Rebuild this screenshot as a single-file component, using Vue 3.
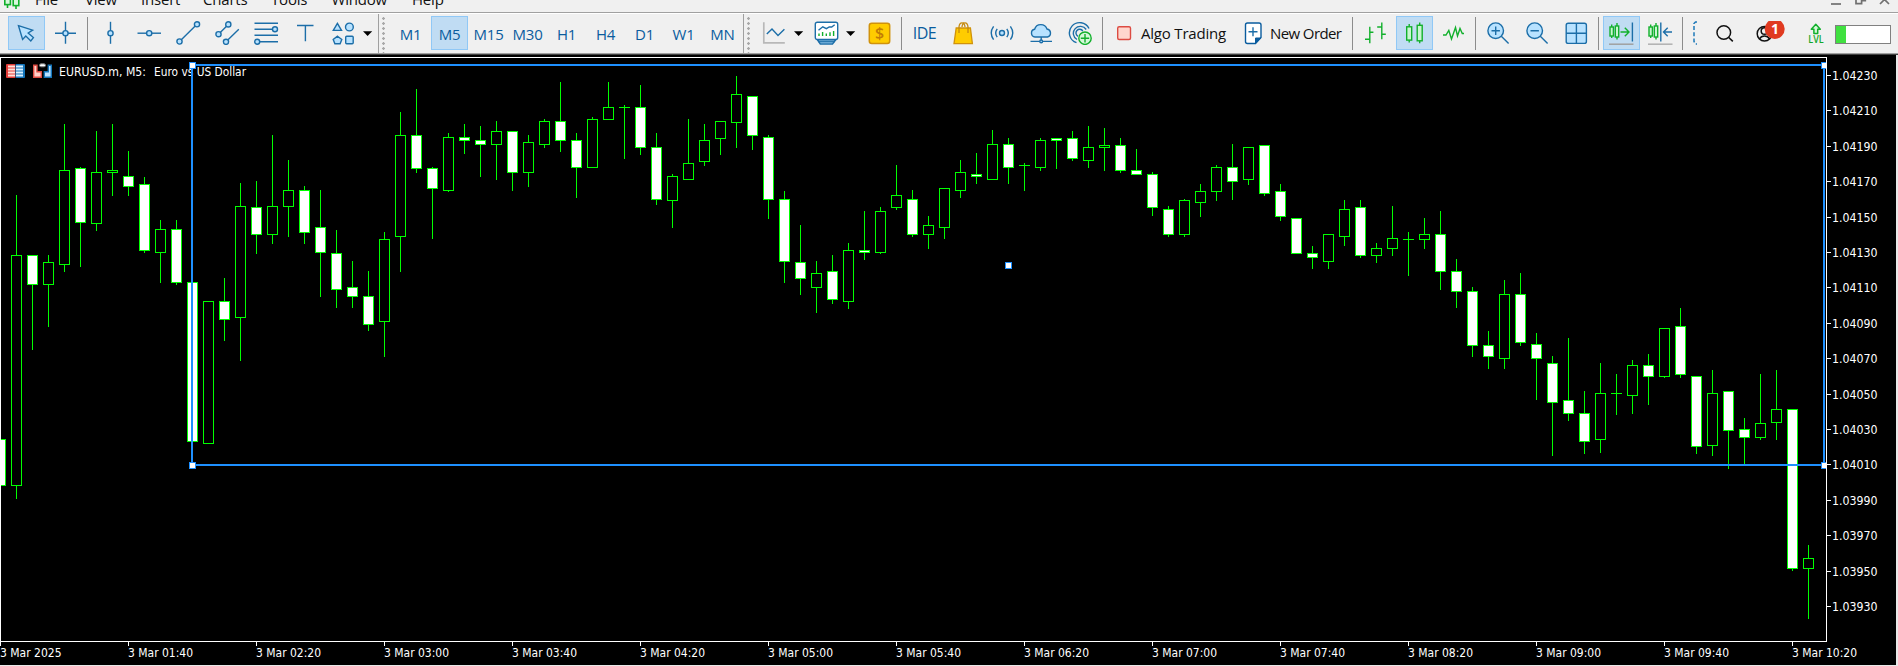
<script setup>
import { computed } from 'vue'

const menus = [
  { label: 'File', width: 50 },
  { label: 'View', width: 56 },
  { label: 'Insert', width: 62 },
  { label: 'Charts', width: 68 },
  { label: 'Tools', width: 60.5 },
  { label: 'Window', width: 80.5 },
  { label: 'Help', width: 60 }
]

const timeframes = ['M1', 'M5', 'M15', 'M30', 'H1', 'H4', 'D1', 'W1', 'MN']
const activeTimeframe = 'M5'

// one row per bar: wick top, body top, body bottom, wick bottom, bearish
const bars = [
  [439, 439, 486, 486, 1], [195, 255, 486, 499, 0], [255, 255, 285, 350, 1], [255, 262, 285, 327, 0],
  [124, 170, 265, 272, 0], [167, 168, 223, 267, 1], [131, 172, 224, 231, 0], [124, 170, 173, 196, 0],
  [151, 176, 187, 196, 1], [177, 184, 251, 253, 1], [220, 229, 253, 283, 0], [220, 229, 283, 285, 1],
  [282, 282, 442, 442, 1], [301, 301, 444, 444, 0], [278, 301, 320, 341, 1], [183, 206, 318, 361, 0],
  [181, 207, 235, 254, 1], [135, 206, 235, 244, 0], [160, 190, 207, 237, 0], [186, 190, 233, 244, 1],
  [190, 227, 253, 297, 1], [230, 253, 290, 308, 1], [261, 287, 297, 308, 1], [271, 296, 325, 331, 1],
  [232, 239, 322, 357, 0], [112, 135, 237, 272, 0], [89, 135, 169, 173, 1], [167, 168, 189, 239, 1],
  [133, 137, 191, 192, 0], [124, 137, 141, 154, 1], [126, 140, 145, 177, 1], [121, 131, 145, 180, 0],
  [131, 131, 173, 191, 1], [135, 142, 173, 187, 0], [119, 121, 145, 148, 0], [82, 121, 141, 152, 1],
  [133, 140, 168, 198, 1], [117, 119, 168, 168, 0], [82, 107, 120, 120, 0], [105, 107, 108, 159, 0],
  [85, 107, 148, 155, 1], [133, 147, 200, 205, 1], [174, 176, 201, 228, 0], [119, 163, 180, 180, 0],
  [124, 140, 162, 166, 0], [121, 121, 139, 155, 0], [76, 94, 123, 148, 0], [96, 96, 136, 150, 1],
  [135, 137, 200, 219, 1], [191, 199, 262, 283, 1], [225, 262, 279, 295, 1], [261, 273, 288, 313, 0],
  [255, 271, 300, 304, 1], [243, 250, 302, 309, 0], [211, 250, 253, 260, 1], [207, 211, 253, 254, 0],
  [165, 195, 208, 210, 0], [190, 199, 235, 237, 1], [216, 225, 235, 249, 0], [188, 188, 228, 239, 0],
  [160, 172, 191, 198, 0], [153, 174, 177, 184, 1], [130, 144, 180, 180, 0], [138, 144, 168, 184, 1],
  [163, 165, 166, 191, 0], [138, 140, 168, 171, 0], [138, 138, 141, 169, 1], [131, 138, 159, 161, 1],
  [126, 147, 161, 168, 0], [128, 145, 148, 171, 0], [138, 145, 171, 173, 1], [149, 170, 175, 175, 1],
  [172, 174, 208, 216, 1], [206, 209, 235, 237, 1], [199, 200, 235, 237, 0], [184, 191, 203, 217, 0],
  [165, 167, 192, 201, 0], [144, 167, 182, 200, 1], [147, 147, 180, 185, 0], [145, 145, 194, 196, 1],
  [184, 191, 217, 221, 1], [218, 218, 254, 254, 1], [246, 253, 258, 269, 1], [234, 234, 262, 269, 0],
  [200, 209, 237, 246, 0], [200, 207, 256, 258, 1], [243, 248, 256, 263, 0], [206, 238, 249, 256, 0],
  [232, 239, 240, 276, 0], [218, 234, 240, 249, 0], [211, 234, 272, 290, 1], [259, 271, 292, 308, 1],
  [287, 291, 346, 357, 1], [331, 345, 357, 369, 1], [280, 294, 359, 369, 0], [273, 294, 343, 346, 1],
  [333, 344, 359, 400, 1], [356, 363, 403, 456, 1], [338, 400, 414, 421, 1], [391, 413, 442, 454, 1],
  [363, 393, 440, 453, 0], [374, 393, 394, 415, 0], [360, 365, 396, 414, 0], [354, 365, 377, 405, 1],
  [328, 328, 377, 378, 0], [308, 326, 375, 378, 1], [376, 376, 447, 454, 1], [370, 393, 446, 456, 0],
  [391, 391, 431, 469, 1], [418, 429, 438, 464, 1], [374, 423, 438, 440, 0], [370, 409, 423, 440, 0],
  [409, 409, 569, 571, 1], [545, 558, 569, 619, 0]
]

const candles = computed(() => bars.map(([high, top, bottom, low, bearish], i) => ({
  x: i * 16,
  high,
  top,
  bottom,
  low,
  bearish
})))

const priceTicks = Array.from({ length: 16 }, (_, i) => ({
  label: (1.0423 - i * 0.0002).toFixed(5),
  y: Math.round(75 + i * 35.4)
}))

const timeTicks = [
  '3 Mar 2025', '3 Mar 01:40', '3 Mar 02:20', '3 Mar 03:00', '3 Mar 03:40',
  '3 Mar 04:20', '3 Mar 05:00', '3 Mar 05:40', '3 Mar 06:20', '3 Mar 07:00',
  '3 Mar 07:40', '3 Mar 08:20', '3 Mar 09:00', '3 Mar 09:40', '3 Mar 10:20'
].map((label, i) => ({ label, x: i * 128, width: i === 0 ? 61.5 : 65 }))

const handles = [
  { x: 189, y: 62 },
  { x: 1821, y: 62 },
  { x: 189, y: 462 },
  { x: 1821, y: 462 },
  { x: 1005, y: 262 }
]
</script>

<template>
  <div class="terminal">
    <header class="menubar">
      <svg class="menu-logo" width="20" height="12" viewBox="0 0 20 12">
        <g fill="#d8f8dc" stroke="#12b02c" stroke-width="1.6">
          <path d="M7.5 4v4M16 5v4" />
          <rect x="4.8" y="-5" width="5.6" height="9.6" />
          <rect x="13.2" y="-5" width="5.6" height="10.6" />
        </g>
      </svg>
      <nav class="menu-items">
        <span
          v-for="menu in menus"
          :key="menu.label"
          class="menu-item"
          :style="{ width: menu.width + 'px' }"
        >{{ menu.label }}</span>
      </nav>
      <svg class="window-controls" width="62" height="12" viewBox="0 0 62 12">
        <g fill="none" stroke="#707070" stroke-width="1.7">
          <path d="M1 4h10" />
          <path d="M26-3v6.600h5.600v-6.600M31 .6h4.300v-5" />
          <path d="M50 4l9-9M59 4l-9-9" />
        </g>
      </svg>
    </header>

    <div class="toolbar">
      <div class="group group-draw">
        <button class="tool active">
          <svg width="25" height="24" viewBox="0 0 25 24">
            <path class="filled" d="M4.5 4.7 18.6 9.2 14.2 12l5.2 4.6-2.6 3.4-5-5-3.2 3.4z" />
          </svg>
        </button>
        <button class="tool">
          <svg width="25" height="24" viewBox="0 0 25 24">
            <path class="line" d="M2 12.2h21M12.5.8v22" />
            <circle class="filled" cx="12.5" cy="12.2" r="2.6" />
          </svg>
        </button>
        <i class="separator"></i>
        <button class="tool">
          <svg width="25" height="24" viewBox="0 0 25 24">
            <path class="line" d="M12.5.8v22" />
            <circle class="filled" cx="12.5" cy="12.2" r="2.6" />
          </svg>
        </button>
        <button class="tool">
          <svg width="25" height="24" viewBox="0 0 25 24">
            <path class="line" d="M.5 12.2h23.5" />
            <circle class="filled" cx="12.2" cy="12.2" r="2.6" />
          </svg>
        </button>
        <button class="tool">
          <svg width="25" height="24" viewBox="0 0 25 24">
            <path class="line" d="M3.5 20.5 21 3.3" />
            <circle class="filled" cx="3.5" cy="20.5" r="2.6" />
            <circle class="filled" cx="21" cy="3.3" r="2.6" />
          </svg>
        </button>
        <button class="tool">
          <svg width="25" height="24" viewBox="0 0 25 24">
            <path class="line" d="M3.5 13.2 13.3 3.4M11 20.8 23.8 8.3" />
            <circle class="filled" cx="3.5" cy="13.2" r="2.6" />
            <circle class="filled" cx="13.3" cy="3.4" r="2.6" />
            <circle class="filled" cx="11" cy="20.8" r="2.6" />
          </svg>
        </button>
        <button class="tool">
          <svg width="25" height="24" viewBox="0 0 25 24">
            <path class="line" d="M.5 2.3h23.5M.5 8.3h20M.5 14.3h23.5M3 20.7h21" />
            <circle class="filled" cx="21" cy="8.3" r="2.5" />
            <circle class="filled" cx="3.2" cy="20.7" r="2.5" />
          </svg>
        </button>
        <button class="tool">
          <svg width="25" height="24" viewBox="0 0 25 24">
            <path class="line" d="M4 4.5h16.5M12.4 4.5v15.8" />
          </svg>
        </button>
        <button class="tool with-arrow">
          <svg width="25" height="24" viewBox="0 0 25 24">
            <path class="filled" d="M6.4 2.4l4.1 7H2.3z" />
            <circle class="filled" cx="18.4" cy="6" r="3.9" />
            <path class="filled" d="M6.5 15.2l4.3 3.2-1.7 4.3H3.9l-1.7-4.3z" />
            <rect class="filled" x="14.7" y="15.2" width="7.5" height="7.5" rx="1" />
          </svg>
        </button>
        <svg class="arrow" width="11" height="24" viewBox="0 0 11 24"><path d="M1 10.2h9.2L5.6 15z" /></svg>
      </div>

      <div class="group group-periods">
        <i class="grip"></i>
        <button
          v-for="timeframe in timeframes"
          :key="timeframe"
          class="tool period"
          :class="{ active: timeframe === activeTimeframe }"
        >{{ timeframe }}</button>
      </div>

      <div class="group">
        <i class="grip"></i>
        <button class="tool with-arrow">
          <svg width="25" height="24" viewBox="0 0 25 24">
            <path d="M1.8 1.2v20.6h21" fill="none" stroke="#b8b8b8" stroke-width="1.7" />
            <path class="line" d="M4.8 13 10 8l6 6.4L22.4 8.2" />
          </svg>
        </button>
        <svg class="arrow" width="11" height="24" viewBox="0 0 11 24"><path d="M1 10.2h9.2L5.6 15z" /></svg>
        <button class="tool with-arrow spaced">
          <svg width="25" height="24" viewBox="0 0 25 24">
            <path class="filled" d="M3.3 18.7h18.6L18.5 23H6.3z" />
            <path class="line" d="M4.5 20.8h16" />
            <rect x="1.3" y="1.2" width="22.4" height="17.3" rx="2" fill="#fff" stroke="#1c6ea8" stroke-width="1.4" />
            <path class="line" d="M4.5 9.3 8.8 5.8l3.6 1.8 2.8-1.6h2.5l3-2.2" />
            <path d="M5 12.5V15M8.6 11v4M12.3 12.5V15M16 11.3V15M19.6 10v5" stroke="#12b02c" stroke-width="1.4" />
          </svg>
        </button>
        <svg class="arrow" width="11" height="24" viewBox="0 0 11 24"><path d="M1 10.2h9.2L5.6 15z" /></svg>
        <button class="tool spaced">
          <svg width="25" height="24" viewBox="0 0 25 24">
            <rect x="2.3" y="2.2" width="20.4" height="20.4" rx="2.5" fill="#fc0" stroke="#d0920c" stroke-width="1.5" />
            <text class="dollar" x="12.5" y="18">$</text>
          </svg>
        </button>
        <i class="separator"></i>
        <button class="tool ide">IDE</button>
        <button class="tool">
          <svg width="25" height="24" viewBox="0 0 25 24">
            <path d="M5.2 7h14.2l2 15.6H3z" fill="#fc0" stroke="#d0920c" stroke-width="1.3" />
            <path d="M8 12V6q.3-4.2 3-4.2t3 4.2M11 6q.3-4.2 3-4.2t3 4.2v6" fill="none" stroke="#c58a10" stroke-width="1.3" />
          </svg>
        </button>
        <button class="tool">
          <svg width="25" height="24" viewBox="0 0 25 24">
            <circle class="filled" cx="12" cy="12" r="2.5" />
            <path class="line" d="M7.2 7.8q-3 4.2 0 8.4M16.8 7.8q3 4.2 0 8.4M3.6 5.4q-4.7 6.6 0 13.2M20.4 5.4q4.7 6.6 0 13.2" />
          </svg>
        </button>
        <button class="tool">
          <svg width="25" height="24" viewBox="0 0 25 24">
            <path class="filled" d="M6 16a3.9 3.9 0 0 1-.4-7.7A6.5 6.5 0 0 1 18 8a4.1 4.1 0 0 1 .5 8z" />
            <path class="line" d="M1.5 20.4h21.5M12.2 16v4" />
            <circle class="filled" cx="12.2" cy="20.4" r="1.4" />
          </svg>
        </button>
        <button class="tool">
          <svg width="25" height="24" viewBox="0 0 25 24">
            <path class="line" d="M21 7.5A10.3 10.3 0 1 0 8.5 21.7M18.2 8.5A7 7 0 1 0 9 18.5M14.8 10A3.7 3.7 0 1 0 10 15.3" />
            <circle cx="17" cy="17.2" r="6.2" fill="#d4f7d8" stroke="#12b02c" stroke-width="1.4" />
            <path d="M12.8 17.2h8.4M17 13v8.4" stroke="#12b02c" stroke-width="1.4" />
          </svg>
        </button>
        <i class="separator"></i>
        <button class="tool labelled algo">
          <svg width="25" height="24" viewBox="0 0 25 24">
            <rect x="5.7" y="5.7" width="12.8" height="12.8" rx="1.5" fill="#ffd6cd" stroke="#dc4b42" stroke-width="1.4" />
          </svg>
          <span>Algo Trading</span>
        </button>
        <button class="tool labelled order">
          <svg width="25" height="24" viewBox="0 0 25 24">
            <path d="M6.5 2h11.5a2 2 0 0 1 2 2v12.5L14.5 22.5h-8a2 2 0 0 1-2-2V4a2 2 0 0 1 2-2z" fill="#fff" stroke="#0a5c9e" stroke-width="1.4" />
            <path d="M14.5 22.5v-5.5H20z" fill="#0a5c9e" stroke="#0a5c9e" />
            <path class="line" d="M7.5 10.8h9M12 6.3v9" />
          </svg>
          <span>New Order</span>
        </button>
        <i class="separator"></i>
        <button class="tool">
          <svg width="25" height="24" viewBox="0 0 25 24">
            <path class="green" d="M6.8 5.7v16.6M2 18.3h4.8M6.8 11.2h3.6M18.8 1.5v16.8M14.2 6h4.6M18.8 13.2h4" />
          </svg>
        </button>
        <button class="tool active">
          <svg width="25" height="24" viewBox="0 0 25 24">
            <path class="green" d="M7.2 3v18.5M17.7 1.5v20.8" />
            <rect class="green-filled" x="4.7" y="5.8" width="5" height="13.3" />
            <rect class="green-filled" x="15.2" y="4.3" width="5" height="15.5" />
          </svg>
        </button>
        <button class="tool">
          <svg width="25" height="24" viewBox="0 0 25 24">
            <path class="green" d="M2 14h3L7.8 9.5 10.5 18 14.5 6.5 16.5 15 19 7.5 21.3 12.5H23" />
          </svg>
        </button>
        <i class="separator"></i>
        <button class="tool">
          <svg width="25" height="24" viewBox="0 0 25 24">
            <circle class="filled" cx="9.7" cy="9.7" r="7.8" />
            <path class="line" d="M15.3 15.3l7.3 7.3M5.5 9.7h8.4M9.7 5.5v8.4" />
          </svg>
        </button>
        <button class="tool">
          <svg width="25" height="24" viewBox="0 0 25 24">
            <circle class="filled" cx="9.7" cy="9.7" r="7.8" />
            <path class="line" d="M15.3 15.3l7.3 7.3M5.5 9.7h8.4" />
          </svg>
        </button>
        <button class="tool">
          <svg width="25" height="24" viewBox="0 0 25 24">
            <rect class="filled" x="2.2" y="2.2" width="20.2" height="20.2" rx="2" />
            <path class="line" d="M12.4 2v20.4M2 12.2h20.4" />
          </svg>
        </button>
        <i class="separator"></i>
        <button class="tool active">
          <svg width="25" height="24" viewBox="0 0 25 24">
            <path class="green" d="M2.7 3.5v13.5M8 2v16.5" />
            <rect class="green-filled" x="1" y="6" width="3.4" height="9" />
            <rect class="green-filled" x="6.3" y="5" width="3.4" height="11" />
            <path class="green" d="M11.5 11h8M15.8 6.8 20 11l-4.2 4.2" />
            <path class="line" d="M23.4 1.5v19" />
            <path d="M0 23.2h24.5" stroke="#a0a0a0" stroke-width="1.5" />
          </svg>
        </button>
        <button class="tool">
          <svg width="25" height="24" viewBox="0 0 25 24">
            <path class="green" d="M2.7 3.5v13.5M8 2v16.5" />
            <rect class="green-filled" x="1" y="6" width="3.4" height="9" />
            <rect class="green-filled" x="6.3" y="5" width="3.4" height="11" />
            <path class="line" d="M12.8 1.5v19M24 11h-8M19.7 6.8 15.5 11l4.2 4.2" />
            <path d="M0 23.2h24.5" stroke="#b0b0b0" stroke-width="1.5" />
          </svg>
        </button>
        <i class="separator"></i>
        <svg class="overflow-mark" width="19" height="24" viewBox="0 0 19 24">
          <path d="M11 1H9.5L8 2.5v18L9.5 23H11" fill="none" stroke="#1c78b8" stroke-width="1.5" stroke-dasharray="4 2.2" />
        </svg>
        <button class="tool">
          <svg width="25" height="24" viewBox="0 0 25 24">
            <circle cx="11.8" cy="11.5" r="6.8" fill="none" stroke="#111" stroke-width="1.5" />
            <path d="M16.5 16.2l4.3 4.2" stroke="#111" stroke-width="1.6" />
          </svg>
        </button>
        <button class="tool profile">
          <svg width="40" height="24" viewBox="0 0 40 24">
            <g fill="none" stroke="#111" stroke-width="1.5">
              <circle cx="12.5" cy="12.7" r="7.3" />
              <circle cx="12.5" cy="10" r="3.3" />
              <path d="M7.5 18q1.5-3 5-3t5 3" />
            </g>
            <circle cx="22.7" cy="8" r="10" fill="#e03a20" />
            <text class="badge-text" x="22.9" y="13">1</text>
          </svg>
        </button>
        <button class="tool level">
          <svg width="25" height="24" viewBox="0 0 25 24">
            <path d="M11.8 3.3l4.5 4.9h-2.6v4.3H9.900V8.200H7.300z" fill="#d4f7d8" stroke="#12b02c" stroke-width="1.5" stroke-linejoin="round" />
            <text class="level-text" x="4.3" y="22.2" textLength="15.400" lengthAdjust="spacingAndGlyphs">LVL</text>
          </svg>
        </button>
        <div class="progress"><i></i></div>
      </div>
    </div>

    <svg class="chart" width="1898" height="611" viewBox="0 55 1898 611">
      <rect x="0" y="55" width="1896" height="610" fill="#000" />

      <g class="crisp">
        <g v-for="candle in candles" :key="candle.x">
          <rect class="wick" :x="candle.x" :y="candle.high" width="1" :height="candle.low - candle.high" />
          <rect class="wick" :x="candle.x - 5" :y="candle.top" width="11" :height="candle.bottom - candle.top" />
          <rect
            v-if="candle.bottom - candle.top > 2"
            :class="candle.bearish ? 'body-down' : 'body-up'"
            :x="candle.x - 4"
            :y="candle.top + 1"
            width="9"
            :height="candle.bottom - candle.top - 2"
          />
        </g>
      </g>

      <!-- depth of market and one-click trading icons -->
      <g>
        <rect x="6" y="64" width="9.5" height="14" rx="1" fill="#e23c38" />
        <rect x="15.5" y="64" width="9.5" height="14" rx="1" fill="#1273b8" />
        <path d="M8 66.500h7M8 69.500h7M8 72.500h7M8 75.500h7" stroke="#ffe1da" stroke-width="1.9" />
        <path d="M16 66.500h7M16 69.500h7M16 72.500h7M16 75.500h7" stroke="#d6f0ff" stroke-width="1.9" />
        <path d="M33.700 65.200h3.300v6.600h4.300v5.400h-7.600z" fill="#ffcfc7" stroke="#dc4b42" stroke-width="1.4" />
        <path d="M51.300 65.200h-3v6.600h-4v5.400h7z" fill="#b8e0ff" stroke="#1273b8" stroke-width="1.4" />
        <rect x="39.5" y="63.8" width="6" height="3" rx="1.5" fill="#fff" stroke="#777" />
      </g>
      <text class="label" x="59" y="76" textLength="87" lengthAdjust="spacingAndGlyphs">EURUSD.m, M5:</text>
      <text class="label" x="154" y="76" textLength="92" lengthAdjust="spacingAndGlyphs">Euro vs US Dollar</text>

      <g class="crisp">
        <path class="axis" d="M0 57.500H1826.500M.5 57V642M0 641.500H1827M1826.500 57V642" />
        <rect x="192" y="65" width="1632" height="400" fill="none" stroke="#1e90ff" stroke-width="2" />
        <g v-for="handle in handles" :key="`${handle.x}-${handle.y}`">
          <rect :x="handle.x" :y="handle.y" :width="Math.min(7, 1826 - handle.x)" height="7" fill="#1e90ff" />
          <rect :x="handle.x + 1" :y="handle.y + 1" :width="Math.min(5, 1825 - handle.x)" height="5" fill="#fff" />
        </g>
      </g>

      <g v-for="tick in priceTicks" :key="tick.label">
        <rect x="1827" :y="tick.y" width="4" height="1" fill="#fff" />
        <text class="label" x="1832" :y="tick.y + 5" textLength="45.5" lengthAdjust="spacingAndGlyphs">{{ tick.label }}</text>
      </g>

      <g v-for="tick in timeTicks" :key="tick.label">
        <rect :x="tick.x" y="642" width="1" height="4" fill="#fff" />
        <text class="label" :x="tick.x" y="657" :textLength="tick.width" lengthAdjust="spacingAndGlyphs">{{ tick.label }}</text>
      </g>
    </svg>
  </div>
</template>

<style>
body {
  margin: 0;
  overflow: hidden;
  background: #f0f0f0;
}
</style>

<style scoped>
.terminal {
  width: 1898px;
  height: 666px;
  overflow: hidden;
  background: #e8e8e8;
  font-family: "Open Sans", "Noto Sans", sans-serif;
}

.menubar {
  display: flex;
  box-sizing: border-box;
  height: 14px;
  overflow: hidden;
  background: #f0f0f0;
  border-bottom: 1px solid #fff;
  box-shadow: inset 0 -1px #a0a0a0;
}

.menu-items {
  display: flex;
  flex: 1;
  margin-left: 15px;
}

.menu-item {
  margin-top: -12px;
  font-size: 15px;
  line-height: 23px;
  letter-spacing: -0.2px;
  color: #111;
  white-space: nowrap;
}

.window-controls {
  margin-right: 6px;
}

.toolbar {
  display: flex;
  box-sizing: border-box;
  height: 41px;
  background: #f0f0f0;
  border-bottom: 1px solid #404040;
  box-shadow: inset 0 -1px #a0a0a0;
}

.group {
  display: flex;
  box-sizing: border-box;
  padding-top: 2px;
}

.group-draw {
  width: 379px;
  padding-left: 7px;
  border-right: 1px solid #a0a0a0;
}

.group-periods {
  width: 365px;
  border-right: 1px solid #a0a0a0;
}

.tool {
  display: flex;
  flex: none;
  align-items: center;
  justify-content: center;
  box-sizing: border-box;
  width: 39px;
  height: 34px;
  padding: 0;
  background: none;
  border: 0 solid transparent;
  color: #111;
  font: inherit;
  font-size: 15px;
  white-space: nowrap;
}

.tool svg {
  flex: none;
}

.tool.active {
  width: 37px;
  margin: 0 1px;
  background: #c0dcf3;
  box-shadow: inset 0 0 0 1px #90c8f6;
}

.tool.with-arrow {
  width: 37px;
}

.tool.spaced {
  margin-left: 4px;
}

.tool.period {
  padding-top: 2px;
  color: #0a5c9e;
  letter-spacing: -0.2px;
}

.tool.ide {
  color: #0a5c9e;
  font-size: 16px;
  letter-spacing: -0.5px;
}

.tool.labelled {
  justify-content: flex-start;
}

.tool.labelled span {
  margin-left: 4px;
}

.tool.algo {
  width: 130px;
  padding-left: 6px;
  letter-spacing: -0.2px;
}

.tool.order {
  width: 114px;
  padding-left: 5px;
  letter-spacing: -0.6px;
}

.tool.profile {
  justify-content: flex-start;
  width: 60px;
  padding-left: 8px;
}

.tool.level {
  width: 25px;
}

.separator {
  flex: none;
  box-sizing: border-box;
  width: 1px;
  height: 33px;
  margin: 1px 3px 0 2px;
  background: #8c8c8c;
}

.grip {
  flex: none;
  width: 3px;
  height: 37px;
  margin: 0 6px 0 3px;
  background: radial-gradient(circle, #a8a8a8 1.1px, transparent 1.5px) 0 0 / 3px 5px;
}

.arrow,
.overflow-mark {
  flex: none;
  margin-top: 5px;
}

.line {
  fill: none;
  stroke: #1c6ea8;
  stroke-width: 1.4;
}

.filled {
  fill: #b8e2ff;
  stroke: #1c6ea8;
  stroke-width: 1.4;
}

.green {
  fill: none;
  stroke: #12b02c;
  stroke-width: 1.4;
}

.green-filled {
  fill: #c8f6d0;
  stroke: #12b02c;
  stroke-width: 1.4;
}

.dollar {
  fill: #c27c06;
  font-size: 16px;
  font-weight: 600;
  text-anchor: middle;
}

.badge-text {
  fill: #fff;
  font-size: 14px;
  font-weight: 700;
  text-anchor: middle;
}

.level-text {
  fill: #12a82a;
  font-size: 10.5px;
  font-weight: 600;
}

.progress {
  box-sizing: border-box;
  width: 56px;
  height: 19px;
  margin: 9px 0 0 6px;
  background: #fff;
  border: 1px solid #808080;
}

.progress i {
  display: block;
  width: 10px;
  height: 100%;
  background: #40e040;
}

.chart {
  display: block;
}

.crisp {
  shape-rendering: crispEdges;
}

.wick {
  fill: #0f0;
}

.body-down {
  fill: #fff;
}

.body-up {
  fill: #000;
}

.axis {
  fill: none;
  stroke: #fff;
  stroke-width: 1;
}

.label {
  fill: #fff;
  font-family: "DejaVu Sans Condensed", "DejaVu Sans", "Noto Sans", sans-serif;
  font-size: 12px;
}
</style>
